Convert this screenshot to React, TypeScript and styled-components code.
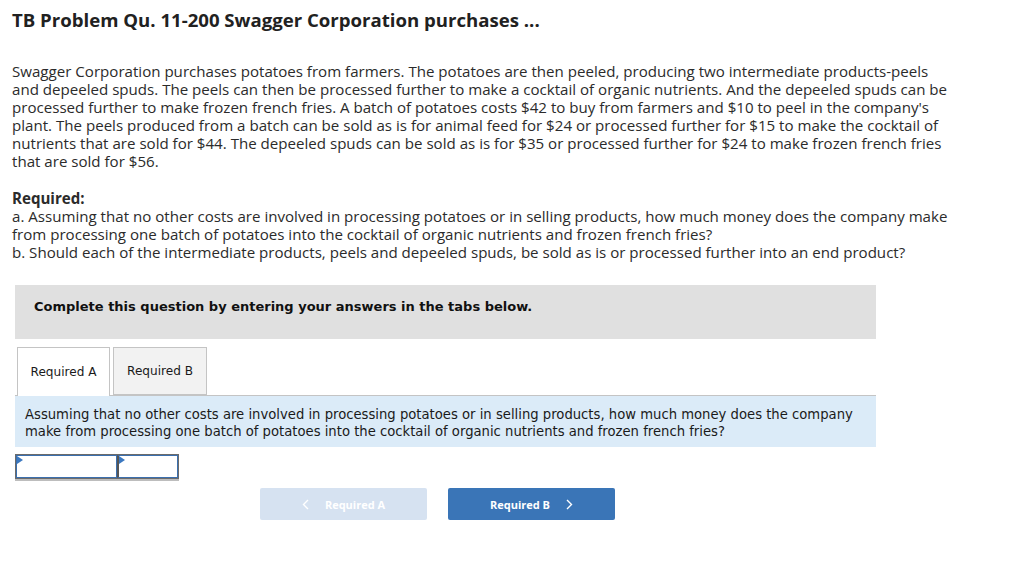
import React from 'react'
import styled, { createGlobalStyle } from 'styled-components'

const GlobalStyle = createGlobalStyle`
  html, body {
    margin: 0;
    padding: 0;
    background: #ffffff;
  }
  body {
    font-family: 'Open Sans', 'Liberation Sans', sans-serif;
    color: #222222;
  }
`

const Page = styled.div`
  width: 1024px;
  height: 567px;
  box-sizing: border-box;
  padding: 9px 12px 0 12px;
  overflow: hidden;
`

const Title = styled.h1`
  margin: 0;
  font-family: 'Open Sans', 'Liberation Sans', sans-serif;
  font-size: 18.6px;
  font-weight: 700;
  line-height: 22px;
  color: #212121;
`

const Paragraph = styled.p`
  margin: 31px 0 0 0;
  font-size: 15.1px;
  line-height: 18px;
  color: #2b2b2b;
  white-space: nowrap;
`

const Required = styled.div`
  margin-top: 19px;
  font-size: 15.1px;
  line-height: 18px;
  color: #2b2b2b;
  white-space: nowrap;
`

const RequiredLabel = styled.div`
  font-weight: 700;
`

const Work = styled.div`
  margin: 24px 0 0 3px;
  width: 861px;
  font-family: Verdana, 'DejaVu Sans', sans-serif;
`

const Banner = styled.div`
  height: 54px;
  box-sizing: border-box;
  background: #e0e0e0;
  padding: 14px 0 0 19px;
  font-size: 13px;
  line-height: 16px;
  font-weight: 700;
  color: #111111;
`

const Tabs = styled.div`
  display: flex;
  gap: 3px;
  margin-top: 8px;
  padding-left: 2px;
  border-bottom: 1px solid #c4c4c4;
  height: 48px;
`

const Tab = styled.div<{ $active?: boolean }>`
  box-sizing: border-box;
  height: ${({ $active }) => ($active ? '49px' : '48px')};
  width: ${({ $active }) => ($active ? '93px' : '94px')};
  display: flex;
  align-items: center;
  justify-content: center;
  font-size: 12.1px;
  color: #1a1a1a;
  background: ${({ $active }) => ($active ? '#ffffff' : '#f2f2f2')};
  border: 1px solid #c4c4c4;
  border-bottom: ${({ $active }) => ($active ? 'none' : '1px solid #c4c4c4')};
  position: relative;
  z-index: 1;
`

const Info = styled.div`
  background: #dbebf8;
  height: 51px;
  box-sizing: border-box;
  padding: 10px 10px 0 10px;
  font-size: 13.2px;
  line-height: 17px;
  color: #1a1a1a;
  white-space: nowrap;
`

const Cells = styled.div`
  display: flex;
  margin-top: 7px;
  width: 164px;
  height: 25px;
  box-sizing: border-box;
  border: 1px solid #6b6b6b;
  box-shadow: 0 2px 0 #bdbdbd;
`

const Cell = styled.div<{ $w: number }>`
  width: ${({ $w }) => $w}px;
  box-sizing: border-box;
  border: 1px solid #3b6fae;
  position: relative;
  & + & {
    border-left: 2px solid #555555;
  }
  &::before {
    content: '';
    position: absolute;
    left: 0;
    top: 0;
    border-top: 4px solid transparent;
    border-bottom: 4px solid transparent;
    border-left: 6px solid #3b78c0;
  }
`

const Nav = styled.div`
  display: flex;
  gap: 21px;
  margin: 9px 0 0 245px;
`

const NavButton = styled.button<{ $disabled?: boolean }>`
  width: 167px;
  height: 32px;
  border: none;
  border-radius: 2px;
  background: ${({ $disabled }) => ($disabled ? '#d6e2f1' : '#3a75b7')};
  color: #ffffff;
  font-family: 'Open Sans', 'Liberation Sans', sans-serif;
  font-size: 11px;
  font-weight: 700;
  display: flex;
  align-items: center;
  justify-content: center;
  gap: 16px;
  padding: 0;
  cursor: ${({ $disabled }) => ($disabled ? 'default' : 'pointer')};
`

const Chevron = ({ dir }: { dir: 'left' | 'right' }) => (
  <svg width="7" height="11" viewBox="0 0 7 11" fill="none">
    <path
      d={dir === 'left' ? 'M6 1L1.5 5.5L6 10' : 'M1 1L5.5 5.5L1 10'}
      stroke="#ffffff"
      strokeWidth="1.4"
    />
  </svg>
)

const App = () => (
  <>
    <GlobalStyle />
    <Page>
      <Title>TB Problem Qu. 11-200 Swagger Corporation purchases ...</Title>
      <Paragraph>
        Swagger Corporation purchases potatoes from farmers. The potatoes are then peeled, producing two intermediate products-peels
        <br />
        and depeeled spuds. The peels can then be processed further to make a cocktail of organic nutrients. And the depeeled spuds can be
        <br />
        processed further to make frozen french fries. A batch of potatoes costs $42 to buy from farmers and $10 to peel in the company's
        <br />
        plant. The peels produced from a batch can be sold as is for animal feed for $24 or processed further for $15 to make the cocktail of
        <br />
        nutrients that are sold for $44. The depeeled spuds can be sold as is for $35 or processed further for $24 to make frozen french fries
        <br />
        that are sold for $56.
      </Paragraph>
      <Required>
        <RequiredLabel>Required:</RequiredLabel>
        a. Assuming that no other costs are involved in processing potatoes or in selling products, how much money does the company make
        <br />
        from processing one batch of potatoes into the cocktail of organic nutrients and frozen french fries?
        <br />
        b. Should each of the intermediate products, peels and depeeled spuds, be sold as is or processed further into an end product?
      </Required>
      <Work>
        <Banner>Complete this question by entering your answers in the tabs below.</Banner>
        <Tabs>
          <Tab $active>Required A</Tab>
          <Tab>Required B</Tab>
        </Tabs>
        <Info>
          Assuming that no other costs are involved in processing potatoes or in selling products, how much money does the company
          <br />
          make from processing one batch of potatoes into the cocktail of organic nutrients and frozen french fries?
        </Info>
        <Cells>
          <Cell $w={101} />
          <Cell $w={61} />
        </Cells>
        <Nav>
          <NavButton $disabled disabled>
            <Chevron dir="left" />
            Required A
          </NavButton>
          <NavButton>
            Required B
            <Chevron dir="right" />
          </NavButton>
        </Nav>
      </Work>
    </Page>
  </>
)

export default App
